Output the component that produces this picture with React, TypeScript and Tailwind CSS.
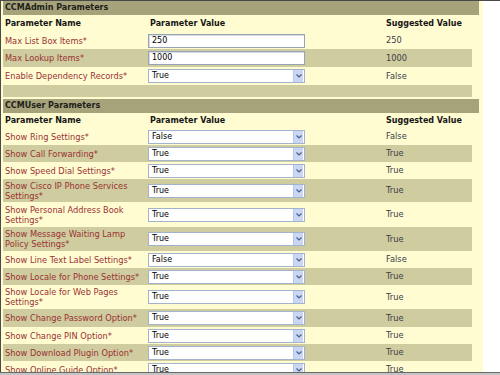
import React from "react";

type Row = { name: string[]; value: string; kind: "input" | "select"; suggested: string; h: string };

const admin: Row[] = [
  { name: ["Max List Box Items*"], value: "250", kind: "input", suggested: "250", h: "h-[17px]" },
  { name: ["Max Lookup Items*"], value: "1000", kind: "input", suggested: "1000", h: "h-[18px]" },
  { name: ["Enable Dependency Records*"], value: "True", kind: "select", suggested: "False", h: "h-[18px]" },
];

const user: Row[] = [
  { name: ["Show Ring Settings*"], value: "False", kind: "select", suggested: "False", h: "h-[17px]" },
  { name: ["Show Call Forwarding*"], value: "True", kind: "select", suggested: "True", h: "h-[17px]" },
  { name: ["Show Speed Dial Settings*"], value: "True", kind: "select", suggested: "True", h: "h-[17px]" },
  { name: ["Show Cisco IP Phone Services", "Settings*"], value: "True", kind: "select", suggested: "True", h: "h-[23px]" },
  { name: ["Show Personal Address Book", "Settings*"], value: "True", kind: "select", suggested: "True", h: "h-[25px]" },
  { name: ["Show Message Waiting Lamp", "Policy Settings*"], value: "True", kind: "select", suggested: "True", h: "h-[24px]" },
  { name: ["Show Line Text Label Settings*"], value: "False", kind: "select", suggested: "False", h: "h-[17px]" },
  { name: ["Show Locale for Phone Settings*"], value: "True", kind: "select", suggested: "True", h: "h-[17px]" },
  { name: ["Show Locale for Web Pages", "Settings*"], value: "True", kind: "select", suggested: "True", h: "h-[24px]" },
  { name: ["Show Change Password Option*"], value: "True", kind: "select", suggested: "True", h: "h-[18px]" },
  { name: ["Show Change PIN Option*"], value: "True", kind: "select", suggested: "True", h: "h-[17px]" },
  { name: ["Show Download Plugin Option*"], value: "True", kind: "select", suggested: "True", h: "h-[17px]" },
  { name: ["Show Online Guide Option*"], value: "True", kind: "select", suggested: "True", h: "h-[17px]" },
];

function Field({ kind, value }: { kind: "input" | "select"; value: string }) {
  if (kind === "input") {
    return (
      <div className="w-[157px] h-[14px] bg-white border border-[#98a4b4] shadow-[inset_1px_1px_0_#d8dde4] flex items-center pl-[3px] text-black leading-none">
        {value}
      </div>
    );
  }
  return (
    <div className="w-[157px] h-[14px] bg-white border border-[#a3b3cc] flex items-center text-black leading-none">
      <span className="flex-1 pl-[3px]">{value}</span>
      <span className="w-[10px] h-[12px] mr-px bg-[#c9d7f5] border-l border-[#b8c8ec] flex items-center justify-center">
        <svg width="6" height="4" viewBox="0 0 6 4">
          <path d="M0.5 0.5 L3 3 L5.5 0.5" stroke="#4a5f8c" strokeWidth="1.2" fill="none" />
        </svg>
      </span>
    </div>
  );
}

function DataRow({ r, band }: { r: Row; band: boolean }) {
  return (
    <div className={`grid grid-cols-[144px_236px_1fr] items-center ${r.h} ${band ? "bg-[#cfcc9f]" : ""}`}>
      <div className="pl-[2px] text-[#9a3232] text-[8.25px] leading-[10px]">
        {r.name.map((l, i) => (
          <div key={i}>{l}</div>
        ))}
      </div>
      <div className="pl-px">
        <Field kind={r.kind} value={r.value} />
      </div>
      <div className="pl-[3px] text-[#3a3d48] text-[8.25px]">{r.suggested}</div>
    </div>
  );
}

function SectionHeader({ title }: { title: string }) {
  return (
    <div className="w-[476px] h-[14px] bg-[#a6a37a] flex items-center pl-[2px] font-bold text-[#1e1e1a]">
      {title}
    </div>
  );
}

function ColHeads({ h }: { h: string }) {
  return (
    <div className={`grid grid-cols-[144px_236px_1fr] items-center ${h} font-bold text-[#161616]`}>
      <div className="pl-[2px]">Parameter Name</div>
      <div className="pl-[3px]">Parameter Value</div>
      <div className="pl-[3px]">Suggested Value</div>
    </div>
  );
}

export default function App() {
  return (
    <div className="w-[500px] h-[375px] overflow-hidden bg-white flex flex-col font-['DejaVu_Sans','Verdana',sans-serif] text-[8px]">
      <div className="h-px bg-[#4a4a4a] shrink-0" />
      <div className="flex-1 flex min-h-0">
        <div className="w-px bg-[#4a4a4a] shrink-0" />
        <div className="w-[482px] bg-[#fffcd2] pl-[2px] overflow-hidden">
          <SectionHeader title="CCMAdmin Parameters" />
          <div className="w-[469px]">
            <ColHeads h="h-[17px]" />
            {admin.map((r, i) => (
              <DataRow key={i} r={r} band={i % 2 === 1} />
            ))}
            <div className="h-[12px] bg-[#cfcc9f]" />
          </div>
          <div className="h-[2px]" />
          <SectionHeader title="CCMUser Parameters" />
          <div className="w-[469px]">
            <ColHeads h="h-[15px]" />
            {user.map((r, i) => (
              <DataRow key={i} r={r} band={i % 2 === 1} />
            ))}
          </div>
        </div>
      </div>
      <div className="h-px bg-[#6a6a6a] shrink-0" />
      <div className="h-[2px] bg-[#c4c4c4] shrink-0" />
    </div>
  );
}
